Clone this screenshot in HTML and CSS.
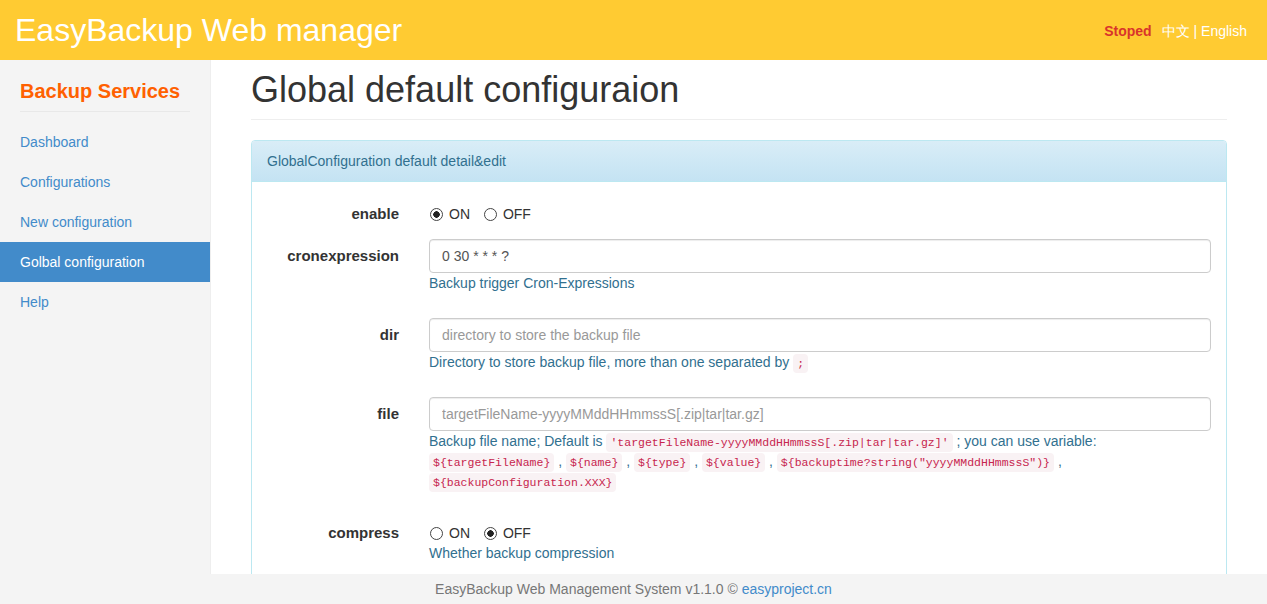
FILE: index.html
```html
<!DOCTYPE html>
<html lang="en">
<head>
<meta charset="utf-8">
<title>EasyBackup Web manager</title>
<link rel="stylesheet" href="styles.css">
</head>
<body>
<header class="topbar">
  <a class="brand" href="#">EasyBackup Web manager</a>
  <div class="topnav">
    <span class="status">Stoped</span>
    <span class="lang"><a href="#">中文</a> | <a href="#">English</a></span>
  </div>
</header>
<div class="layout">
  <aside class="sidebar">
    <h3 class="side-title">Backup Services</h3>
    <ul class="side-nav">
      <li><a href="#">Dashboard</a></li>
      <li><a href="#">Configurations</a></li>
      <li><a href="#">New configuration</a></li>
      <li class="active"><a href="#">Golbal configuration</a></li>
      <li><a href="#">Help</a></li>
    </ul>
  </aside>
  <main class="main">
    <h1 class="page-header">Global default configuraion</h1>
    <section class="panel">
      <div class="panel-heading">GlobalConfiguration default detail&amp;edit</div>
      <form class="panel-body">
        <div class="form-group">
          <label class="control-label">enable</label>
          <div class="control">
            <label class="radio-inline"><input type="radio" name="enable" checked> ON</label>
            <label class="radio-inline"><input type="radio" name="enable"> OFF</label>
          </div>
        </div>
        <div class="form-group">
          <label class="control-label">cronexpression</label>
          <div class="control">
            <input class="form-control" type="text" value="0 30 * * * ?">
            <span class="help-block">Backup trigger Cron-Expressions</span>
          </div>
        </div>
        <div class="form-group">
          <label class="control-label">dir</label>
          <div class="control">
            <input class="form-control" type="text" placeholder="directory to store the backup file">
            <span class="help-block">Directory to store backup file, more than one separated by <code>;</code></span>
          </div>
        </div>
        <div class="form-group">
          <label class="control-label">file</label>
          <div class="control">
            <input class="form-control" type="text" placeholder="targetFileName-yyyyMMddHHmmssS[.zip|tar|tar.gz]">
            <span class="help-block">Backup file name; Default is <code>'targetFileName-yyyyMMddHHmmssS[.zip|tar|tar.gz]'</code> ; you can use variable: <code>${targetFileName}</code> , <code>${name}</code> , <code>${type}</code> , <code>${value}</code> , <code>${backuptime?string("yyyyMMddHHmmssS")}</code> , <code>${backupConfiguration.XXX}</code></span>
          </div>
        </div>
        <div class="form-group">
          <label class="control-label">compress</label>
          <div class="control">
            <label class="radio-inline"><input type="radio" name="compress"> ON</label>
            <label class="radio-inline"><input type="radio" name="compress" checked> OFF</label>
            <span class="help-block">Whether backup compression</span>
          </div>
        </div>
      </form>
    </section>
  </main>
</div>
<footer class="footer">EasyBackup Web Management System v1.1.0 © <a href="#">easyproject.cn</a></footer>
</body>
</html>
```
FILE: styles.css
```css
* { box-sizing: border-box; }
html, body { height: 100%; }
body {
  margin: 0;
  font-family: "Liberation Sans", Arial, sans-serif;
  font-size: 14px;
  line-height: 20px;
  color: #333;
  background: #fff;
  display: flex;
  flex-direction: column;
  overflow: hidden;
}
a { text-decoration: none; }

.topbar {
  height: 60px;
  flex: none;
  background: #ffcb32;
  display: flex;
  align-items: center;
  justify-content: space-between;
  padding: 0 20px 0 15px;
}
.brand {
  color: #fff;
  font-size: 32px;
  line-height: 36px;
}
.topnav { display: flex; align-items: center; gap: 10px; padding-top: 1px; }
.status { color: #d9342b; font-weight: bold; }
.lang { color: #fff; }
.lang a { color: #fff; }

.layout {
  flex: 1;
  min-height: 0;
  display: flex;
  overflow: hidden;
}
.sidebar {
  width: 211px;
  flex: none;
  background: #f4f4f4;
  border-right: 1px solid #eee;
  padding: 20px 20px;
}
.side-title {
  margin: 0 0 10px;
  padding-bottom: 9px;
  border-bottom: 1px solid #e8e8e8;
  color: #ff6000;
  font-size: 20px;
  line-height: 22px;
  font-weight: bold;
}
.side-nav {
  list-style: none;
  margin: 0 -20px;
  padding: 0;
}
.side-nav a {
  display: block;
  padding: 10px 20px;
  color: #428bca;
}
.side-nav .active a {
  background: #428bca;
  color: #fff;
}

.main {
  flex: 1;
  min-width: 0;
  padding: 10px 40px 0 40px;
}
.page-header {
  margin: 0 0 20px;
  padding-bottom: 9px;
  border-bottom: 1px solid #eee;
  font-size: 36px;
  line-height: 39.6px;
  font-weight: 500;
  color: #333;
}
.panel {
  border: 1px solid #bce8f1;
  border-radius: 4px;
  min-height: 480px;
}
.panel-heading {
  padding: 10px 15px;
  color: #31708f;
  background: linear-gradient(to bottom, #d9edf7 0%, #c4e3f3 100%);
  border-bottom: 1px solid #bce8f1;
  border-radius: 3px 3px 0 0;
}
.panel-body {
  padding: 15px;
  margin: 0;
}
.form-group {
  display: grid;
  grid-template-columns: 132px 1fr;
  column-gap: 30px;
  margin-bottom: 15px;
}
.control-label {
  padding-top: 7px;
  text-align: right;
  font-weight: bold;
  font-size: 15px;
}
.control { min-width: 0; }
.radio-inline {
  display: inline-block;
  position: relative;
  padding-top: 7px;
  padding-left: 20px;
  min-height: 27px;
  vertical-align: top;
}
.radio-inline + .radio-inline { margin-left: 9px; }
.radio-inline input {
  -webkit-appearance: none;
  appearance: none;
  position: absolute;
  left: 1px;
  top: 11px;
  margin: 0;
  width: 13px;
  height: 13px;
  border: 1px solid #444;
  border-radius: 50%;
  background: #fff;
}
.radio-inline input:checked {
  background: radial-gradient(circle, #222 0 3px, #fff 3.5px);
}
.form-control {
  display: block;
  width: 100%;
  height: 34px;
  padding: 6px 12px;
  font-family: inherit;
  font-size: 14px;
  line-height: 20px;
  color: #555;
  background: #fff;
  border: 1px solid #ccc;
  border-radius: 4px;
  box-shadow: inset 0 1px 1px rgba(0,0,0,.075);
}
.form-control::placeholder { color: #999; }
.help-block {
  display: block;
  margin: 0 0 10px;
  color: #31708f;
}
code {
  font-family: "Liberation Mono", "DejaVu Sans Mono", monospace;
  font-size: 11.5px;
  line-height: 1;
  padding: 3px 4px;
  color: #c7254e;
  background: #f9f2f4;
  border-radius: 4px;
}

.footer {
  height: 30px;
  flex: none;
  background: #f4f4f4;
  text-align: center;
  line-height: 30px;
  color: #777;
}
.footer a { color: #428bca; }
```
